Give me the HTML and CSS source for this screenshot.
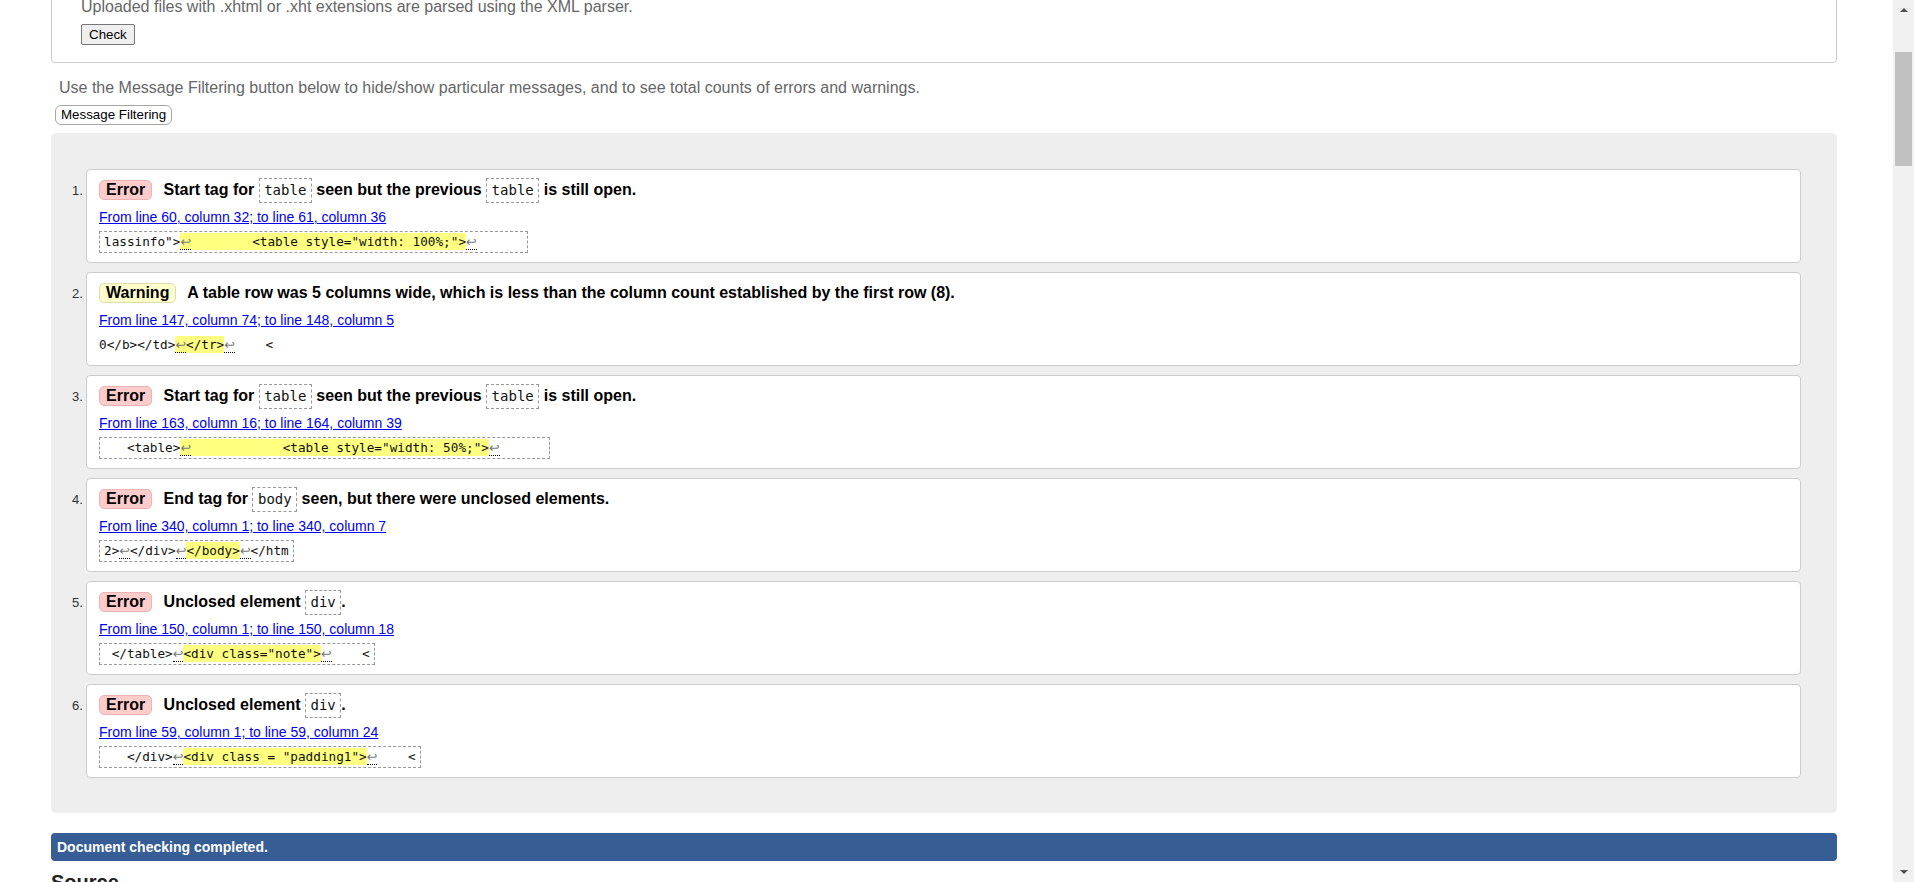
FILE: index.html
```html
<!DOCTYPE html>
<html lang="en">
<head>
<meta charset="utf-8">
<title>Showing results - Nu Html Checker</title>
<link rel="stylesheet" href="styles.css">
</head>
<body>
<div class="screen">
  <main class="page">
    <form class="upload">
      <p class="upload-note">Uploaded files with .xhtml or .xht extensions are parsed using the XML parser.</p>
      <button type="button" class="check-btn">Check</button>
    </form>
    <p class="filter-hint">Use the Message Filtering button below to hide/show particular messages, and to see total counts of errors and warnings.</p>
    <button type="button" class="filter-btn">Message Filtering</button>
    <div class="results">
      <ol class="messages">
        <li class="msg">
          <span class="num">1.</span>
          <div class="card">
            <p class="title"><strong class="badge error">Error</strong> Start tag for <code>table</code> seen but the previous <code>table</code> is still open.</p>
            <p class="loc"><a href="#l60">From line 60, column 32; to line 61, column 36</a></p>
            <pre class="extract"><code>lassinfo"&gt;<mark><span class="lf">↩</span>        &lt;table style="width: 100%;"&gt;</mark><span class="lf">↩</span>      </code></pre>
          </div>
        </li>
        <li class="msg">
          <span class="num">2.</span>
          <div class="card">
            <p class="title"><strong class="badge warning">Warning</strong> A table row was 5 columns wide, which is less than the column count established by the first row (8).</p>
            <p class="loc"><a href="#l147">From line 147, column 74; to line 148, column 5</a></p>
            <pre class="extract plain"><code>0&lt;/b&gt;&lt;/td&gt;<mark><span class="lf">↩</span>&lt;/tr&gt;</mark><span class="lf">↩</span>    &lt;</code></pre>
          </div>
        </li>
        <li class="msg">
          <span class="num">3.</span>
          <div class="card">
            <p class="title"><strong class="badge error">Error</strong> Start tag for <code>table</code> seen but the previous <code>table</code> is still open.</p>
            <p class="loc"><a href="#l163">From line 163, column 16; to line 164, column 39</a></p>
            <pre class="extract"><code>   &lt;table&gt;<mark><span class="lf">↩</span>            &lt;table style="width: 50%;"&gt;</mark><span class="lf">↩</span>      </code></pre>
          </div>
        </li>
        <li class="msg">
          <span class="num">4.</span>
          <div class="card">
            <p class="title"><strong class="badge error">Error</strong> End tag for <code>body</code> seen, but there were unclosed elements.</p>
            <p class="loc"><a href="#l340">From line 340, column 1; to line 340, column 7</a></p>
            <pre class="extract"><code>2&gt;<span class="lf">↩</span>&lt;/div&gt;<span class="lf">↩</span><mark>&lt;/body&gt;</mark><span class="lf">↩</span>&lt;/htm</code></pre>
          </div>
        </li>
        <li class="msg">
          <span class="num">5.</span>
          <div class="card">
            <p class="title"><strong class="badge error">Error</strong> Unclosed element <code>div</code>.</p>
            <p class="loc"><a href="#l150">From line 150, column 1; to line 150, column 18</a></p>
            <pre class="extract"><code> &lt;/table&gt;<span class="lf">↩</span><mark>&lt;div class="note"&gt;</mark><span class="lf">↩</span>    &lt;</code></pre>
          </div>
        </li>
        <li class="msg">
          <span class="num">6.</span>
          <div class="card">
            <p class="title"><strong class="badge error">Error</strong> Unclosed element <code>div</code>.</p>
            <p class="loc"><a href="#l59">From line 59, column 1; to line 59, column 24</a></p>
            <pre class="extract"><code>   &lt;/div&gt;<span class="lf">↩</span><mark>&lt;div class = "padding1"&gt;</mark><span class="lf">↩</span>    &lt;</code></pre>
          </div>
        </li>
      </ol>
    </div>
    <p class="status">Document checking completed.</p>
    <h2 class="source-title">Source</h2>
  </main>
  <div class="scrollbar" aria-hidden="true">
    <span class="sb-up"></span>
    <span class="sb-thumb"></span>
    <span class="sb-down"></span>
  </div>
</div>
</body>
</html>
```

FILE: styles.css
```css
html, body {
  margin: 0;
  padding: 0;
  overflow: hidden;
}

body {
  font-family: "Liberation Sans", Arial, sans-serif;
  color: #000;
  background: #fff;
}

.screen {
  display: flex;
  height: 882px;
  overflow: hidden;
}

.page {
  flex: 1 1 auto;
  min-width: 0;
  overflow: hidden;
}

/* upload form (scrolled partly out of view) */
.upload {
  margin: -13px 56px 0 51px;
  border: 1px solid #ccc;
  border-radius: 0 0 4px 4px;
  padding: 10px 29px 17px;
}

.upload-note {
  margin: 0;
  font-size: 16px;
  line-height: 18px;
  color: #666;
}

.check-btn {
  display: block;
  margin-top: 8px;
  font: 13.33px/17px "Liberation Sans", Arial, sans-serif;
  padding: 1px 7px;
  border: 1px solid #767676;
  border-radius: 2px;
  background: #efefef;
  color: #000;
}

.filter-hint {
  margin: 16px 0 0 59px;
  font-size: 16px;
  line-height: 18px;
  color: #666;
}

.filter-btn {
  display: block;
  margin: 8px 0 0 55px;
  font: 13.33px/16px "Liberation Sans", Arial, sans-serif;
  padding: 1px 5px;
  border: 1px solid #a6a6a6;
  border-radius: 6px;
  background: #fff;
  color: #000;
}

/* results panel */
.results {
  margin: 8px 56px 0 51px;
  background: #eee;
  border-radius: 5px;
  padding: 36px 36px 35px 21px;
}

.messages {
  list-style: none;
  margin: 0;
  padding: 0;
  display: flex;
  flex-direction: column;
  gap: 9px;
}

.msg {
  display: flex;
  align-items: baseline;
}

.num {
  flex: 0 0 14px;
  font-size: 13px;
  color: #333;
}

.card {
  flex: 1 1 auto;
  min-width: 0;
  background: #fff;
  border: 1px solid #ccc;
  border-radius: 4px;
  padding: 7px 12px 9px;
}

.title {
  margin: 0;
  font-size: 16px;
  line-height: 26px;
  font-weight: bold;
}

.badge {
  display: inline-block;
  line-height: 18px;
  padding: 0 6px;
  border: 1px solid;
  border-radius: 5px;
  margin-right: 7px;
}

.badge.error {
  background: #ffcccc;
  border-color: #ebb3b3;
}

.badge.warning {
  background: #ffffcc;
  border-color: #deddb0;
}

.title code {
  display: inline-block;
  font: normal 14px/17px "DejaVu Sans Mono", monospace;
  padding: 3px 4.5px;
  border: 1px dashed #999;
  color: #111;
}

.loc {
  margin: 5px 0 0;
  font-size: 14px;
  line-height: 18px;
}

.loc a {
  color: #0000ee;
  text-decoration: underline;
}

.extract {
  margin: 5px 0 0;
  width: fit-content;
  font: 12.7px/16px "DejaVu Sans Mono", monospace;
  white-space: pre;
  padding: 2px 4px;
  border: 1px dashed #999;
  color: #111;
}

.extract code {
  font: inherit;
}

.extract.plain {
  border: none;
  padding: 3px 0;
}

.extract mark {
  background: #ffff80;
  color: inherit;
  padding: 1px 0;
}

.lf {
  font-family: "DejaVu Sans", sans-serif;
  color: #777;
  border-bottom: 1px dotted #000;
}

.status {
  margin: 20px 56px 0 51px;
  background: #365d95;
  color: #fff;
  font-weight: bold;
  font-size: 14px;
  line-height: 28px;
  padding: 0 6px;
  border-radius: 4px;
}

.source-title {
  margin: 10px 0 0 51px;
  font-size: 20px;
  line-height: 23px;
  font-weight: bold;
  color: #222;
}

/* window scrollbar */
.scrollbar {
  flex: 0 0 21px;
  background: #f1f1f1;
  display: flex;
  flex-direction: column;
  align-items: center;
}

.sb-up {
  margin-top: 8px;
  width: 0;
  height: 0;
  border-left: 4.5px solid transparent;
  border-right: 4.5px solid transparent;
  border-bottom: 4px solid #505050;
}

.sb-thumb {
  margin-top: 40px;
  width: 17px;
  height: 114px;
  background: #c1c1c1;
}

.sb-down {
  margin-top: auto;
  margin-bottom: 8px;
  width: 0;
  height: 0;
  border-left: 4.5px solid transparent;
  border-right: 4.5px solid transparent;
  border-top: 4px solid #505050;
}
```
